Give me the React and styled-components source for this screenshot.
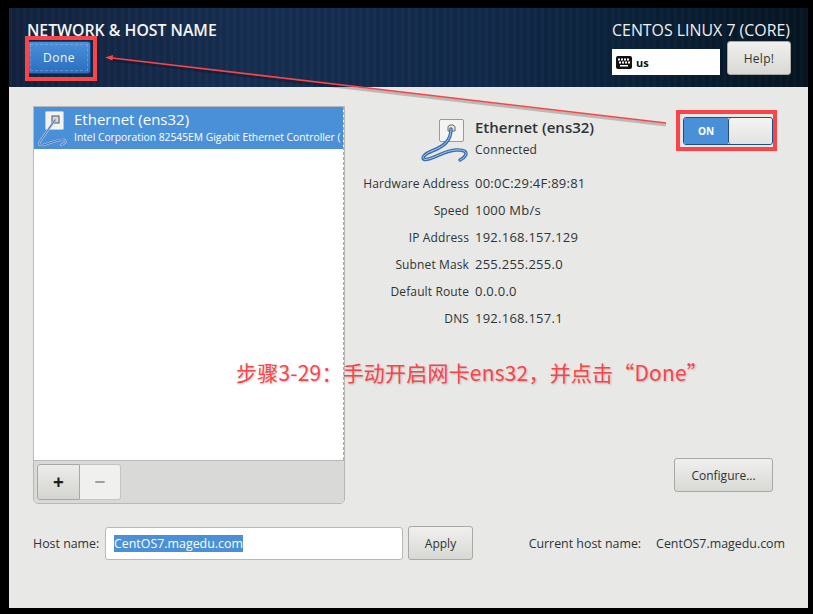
import React from 'react'
import styled, { createGlobalStyle } from 'styled-components'

const details = [
  ['Hardware Address', '00:0C:29:4F:89:81'],
  ['Speed', '1000 Mb/s'],
  ['IP Address', '192.168.157.129'],
  ['Subnet Mask', '255.255.255.0'],
  ['Default Route', '0.0.0.0'],
  ['DNS', '192.168.157.1'],
]

const largeCable = 'M32 11C32 22 26 28 13 33C4 36.500 2 41 6 41.500C15 41 25 32.500 37 32C45 31.500 49 34 46 38C45 40 43 41 41 42'
const smallCable = 'M19 13L5 33C2 37 3 38.500 7 38C15 36 23 32 28 33C31 34 30 36 25 38'

function CableIcon() {
  return (
    <svg width="54" height="50" viewBox="0 0 54 50">
      <rect x="20.500" y="1.500" width="24" height="22" rx="1.500" fill="#f4f4f2" stroke="#9a9a98" />
      <path d="M29 13V8.500L31 7H34L36 8.500V13z" fill="#e8e8e8" stroke="#666" />
      <path d={largeCable} fill="none" stroke="#3a6eb0" strokeWidth="3.500" strokeLinecap="round" />
      <path d={largeCable} fill="none" stroke="#a9c6e8" strokeWidth="1" strokeLinecap="round" />
    </svg>
  )
}

function RowCableIcon() {
  return (
    <svg width="36" height="42" viewBox="0 0 36 42">
      <rect x="9.500" y="4.500" width="18" height="18" rx="1" fill="#f2f2f0" stroke="#b9c6d6" />
      <rect x="16" y="9" width="7" height="7" fill="#d8d8d8" stroke="#555" />
      <path d={smallCable} fill="none" stroke="#a9c3e4" strokeWidth="2.400" strokeLinecap="round" />
      <path d={smallCable} fill="none" stroke="#3f6ea8" strokeWidth="1" strokeLinecap="round" />
    </svg>
  )
}

function KeyboardIcon() {
  return (
    <svg width="16" height="13" viewBox="0 0 16 13">
      <rect width="16" height="13" rx="2" fill="#111" />
      {[2, 5, 8, 11].map(x => <rect key={x} x={x} y="2.500" width="2" height="2" fill="#fff" />)}
      {[3, 6, 9, 12].map(x => <rect key={x} x={x} y="5.500" width="2" height="2" fill="#fff" />)}
      <rect x="4" y="9" width="8" height="1.500" fill="#fff" />
    </svg>
  )
}

export default function App() {
  return (
    <>
      <GlobalStyle />
      <Screen>
        <Header>
          <HeaderLeft>
            <Title>NETWORK &amp; HOST NAME</Title>
            <DoneButton>Done</DoneButton>
          </HeaderLeft>
          <HeaderRight>
            <Product>CENTOS LINUX 7 (CORE)</Product>
            <HeaderControls>
              <Layout>
                <KeyboardIcon />
                <span>us</span>
              </Layout>
              <HelpButton>Help!</HelpButton>
            </HeaderControls>
          </HeaderRight>
        </Header>

        <Main>
          <Columns>
            <DevicePanel>
              <DeviceList>
                <DeviceRow>
                  <RowCableIcon />
                  <DeviceText>
                    <DeviceName>Ethernet (ens32)</DeviceName>
                    <DeviceDesc>Intel Corporation 82545EM Gigabit Ethernet Controller (</DeviceDesc>
                  </DeviceText>
                </DeviceRow>
              </DeviceList>
              <ListToolbar>
                <AddButton>+</AddButton>
                <RemoveButton>−</RemoveButton>
              </ListToolbar>
            </DevicePanel>

            <DetailPane>
              <DetailTop>
                <DetailHead>
                  <CableIcon />
                  <div>
                    <DetailName>Ethernet (ens32)</DetailName>
                    <DetailStatus>Connected</DetailStatus>
                  </div>
                </DetailHead>
                <Toggle>
                  <ToggleOn>ON</ToggleOn>
                  <ToggleKnob />
                </Toggle>
              </DetailTop>
              <DetailGrid>
                {details.map(([label, value]) => (
                  <React.Fragment key={label}>
                    <DetailLabel>{label}</DetailLabel>
                    <DetailValue>{value}</DetailValue>
                  </React.Fragment>
                ))}
              </DetailGrid>
              <ConfigureButton>Configure...</ConfigureButton>
            </DetailPane>
          </Columns>

          <HostRow>
            <HostLabel>Host name:</HostLabel>
            <HostField><Selected>CentOS7.magedu.com</Selected></HostField>
            <ApplyButton>Apply</ApplyButton>
            <CurrentHost>
              <span>Current host name:</span>
              <span>CentOS7.magedu.com</span>
            </CurrentHost>
          </HostRow>
        </Main>

        <DoneMark />
        <ToggleMark />
        <Arrow width="813" height="614" viewBox="0 0 813 614">
          <line x1="666" y1="125" x2="112" y2="60" stroke="#000" strokeOpacity="0.2" strokeWidth="3" />
          <line x1="666" y1="123" x2="112" y2="58" stroke="#fb4348" strokeWidth="1.600" />
          <path d="M105 57.500L113 55L112.500 60.500z" fill="#fb4348" />
        </Arrow>
        <Note>步骤3-29：手动开启网卡ens32，并点击“Done”</Note>
      </Screen>
    </>
  )
}

const GlobalStyle = createGlobalStyle`
  html, body {
    margin: 0;
    background: #000;
  }
  body {
    font-family: "Open Sans", "Noto Sans", sans-serif;
  }
`

const Screen = styled.div`
  position: relative;
  width: 813px;
  height: 614px;
  padding: 8px 5px 6px 9px;
  box-sizing: border-box;
  background: #000;
  overflow: hidden;
  display: flex;
  flex-direction: column;
`

const Header = styled.header`
  height: 79px;
  flex: none;
  box-sizing: border-box;
  padding: 13px 17px 0 18px;
  display: flex;
  justify-content: space-between;
  color: #fff;
  background:
    repeating-linear-gradient(90deg, rgba(255, 255, 255, 0.015) 0 3px, rgba(0, 0, 0, 0.04) 3px 7px),
    linear-gradient(90deg, #13233f 0%, #162f52 30%, #122a4b 60%, #0a2138 80%, #061521 100%);
`

const HeaderLeft = styled.div`
  display: flex;
  flex-direction: column;
`

const Title = styled.h1`
  margin: 0;
  font-size: 15.800px;
  line-height: 18px;
  font-weight: 600;
  white-space: nowrap;
  color: #f4f5f7;
`

const DoneButton = styled.button`
  width: 64px;
  height: 33px;
  margin-top: 2px;
  padding: 0;
  border: 1px solid #16447f;
  border-radius: 3px;
  outline: 1px dashed rgba(170, 205, 245, 0.35);
  outline-offset: -4px;
  color: #f4f7fb;
  font: 12px "Open Sans", sans-serif;
  letter-spacing: 0.5px;
  background: linear-gradient(#4a90d9, #2a6fc0);
`

const HeaderRight = styled.div`
  display: flex;
  flex-direction: column;
  align-items: flex-end;
`

const Product = styled.div`
  font-size: 15.900px;
  line-height: 18px;
  margin-right: 1px;
  white-space: nowrap;
  color: #eef0f2;
`

const HeaderControls = styled.div`
  display: flex;
  align-items: flex-end;
  gap: 7px;
  margin-top: 2px;
`

const Layout = styled.div`
  width: 108px;
  height: 26px;
  box-sizing: border-box;
  padding-left: 4px;
  background: #fff;
  color: #111;
  display: flex;
  align-items: center;
  gap: 4px;
  font-size: 11px;
  font-weight: 700;
`

const GrayButton = styled.button`
  padding: 0;
  border: 1px solid #a8a8a4;
  border-radius: 3px;
  color: #2e3436;
  font: 12px "Open Sans", sans-serif;
  background: linear-gradient(#f0f0ee, #d8d8d5);
`

const HelpButton = styled(GrayButton)`
  width: 64px;
  height: 34px;
  letter-spacing: 0.3px;
`

const Main = styled.main`
  flex: 1;
  background: #e8e8e6;
  padding: 19px 23px 0 24px;
  display: flex;
  flex-direction: column;
`

const Columns = styled.div`
  display: flex;
  height: 398px;
`

const DevicePanel = styled.div`
  width: 312px;
  flex: none;
  box-sizing: border-box;
  border: 1px solid #b8b8b5;
  border-radius: 0 0 5px 5px;
  display: flex;
  flex-direction: column;
  overflow: hidden;
`

const DeviceList = styled.div`
  flex: 1;
  background: #fff;
  border-right: 1px dashed #aaa;
`

const DeviceRow = styled.div`
  height: 42px;
  box-sizing: border-box;
  padding-left: 2px;
  background: #4a90d9;
  color: #fff;
  display: flex;
  gap: 2px;
  overflow: hidden;
  white-space: nowrap;
`

const DeviceText = styled.div`
  min-width: 0;
  padding-top: 2px;
`

const DeviceName = styled.div`
  font-size: 15px;
  line-height: 21px;
`

const DeviceDesc = styled.div`
  font-size: 10.300px;
  line-height: 14px;
`

const ListToolbar = styled.div`
  height: 43px;
  flex: none;
  box-sizing: border-box;
  border-top: 1px solid #b8b8b5;
  background: #d9d9d7;
  padding: 3px;
  display: flex;
`

const AddButton = styled.button`
  width: 43px;
  height: 36px;
  padding: 0;
  border: 1px solid #a8a8a4;
  border-radius: 3px 0 0 3px;
  color: #1c1f20;
  font: 700 19px "Open Sans", sans-serif;
  background: linear-gradient(#ececea, #d4d4d1);
`

const RemoveButton = styled.button`
  width: 41px;
  height: 36px;
  padding: 0;
  border: 1px solid #c4c4c1;
  border-left: 0;
  border-radius: 0 3px 3px 0;
  color: #a0a09e;
  font: 700 19px "Open Sans", sans-serif;
  background: #f0f0ef;
`

const DetailPane = styled.div`
  flex: 1;
  display: flex;
  flex-direction: column;
  color: #2e3436;
`

const DetailTop = styled.div`
  display: flex;
  justify-content: space-between;
  height: 62px;
`

const DetailHead = styled.div`
  display: flex;
  gap: 2px;
  padding: 12px 0 0 74px;
`

const DetailName = styled.div`
  font-size: 15px;
  line-height: 19px;
  font-weight: 600;
`

const DetailStatus = styled.div`
  font-size: 12px;
  line-height: 17px;
  letter-spacing: 0.2px;
  margin-top: 4px;
`

const Toggle = styled.div`
  width: 90px;
  height: 28px;
  margin: 11px 12px 0 0;
  box-sizing: border-box;
  border: 1px solid #1d4f86;
  border-radius: 3px;
  display: flex;
  overflow: hidden;
`

const ToggleOn = styled.div`
  width: 44px;
  background: #4a90d9;
  color: #fff;
  font-size: 10px;
  font-weight: 700;
  line-height: 26px;
  text-align: center;
`

const ToggleKnob = styled.div`
  flex: 1;
  border-left: 1px solid #1d4f86;
  border-radius: 3px;
  background: linear-gradient(#f4f4f3, #e2e2e0);
`

const DetailGrid = styled.div`
  display: grid;
  grid-template-columns: 124px auto;
  grid-auto-rows: 27px;
  column-gap: 6px;
  align-content: start;
  margin-top: 2px;
  font-size: 12px;
  line-height: 27px;
`

const DetailLabel = styled.div`
  text-align: right;
  letter-spacing: 0.12px;
  white-space: nowrap;
`

const DetailValue = styled.div`
  font-size: 13px;
  letter-spacing: 0.25px;
  white-space: nowrap;
`

const ConfigureButton = styled(GrayButton)`
  width: 99px;
  height: 34px;
  margin: auto 12px 12px auto;
`

const HostRow = styled.div`
  display: flex;
  align-items: center;
  margin-top: 22px;
  height: 34px;
  font-size: 12.400px;
  color: #2e3436;
`

const HostLabel = styled.span`
  width: 72px;
  flex: none;
`

const HostField = styled.div`
  width: 298px;
  height: 33px;
  box-sizing: border-box;
  border: 1px solid #b8b8b5;
  border-radius: 3px;
  background: #fff;
  padding-left: 8px;
  display: flex;
  align-items: center;
`

const Selected = styled.span`
  background: #4a90d9;
  color: #fff;
  line-height: 17px;
`

const ApplyButton = styled(GrayButton)`
  width: 65px;
  height: 34px;
  margin-left: 5px;
`

const CurrentHost = styled.div`
  margin-left: auto;
  display: flex;
  gap: 15px;
`

const Mark = styled.div`
  position: absolute;
  box-sizing: border-box;
  border: 4px solid #fb4348;
`

const DoneMark = styled(Mark)`
  left: 25px;
  top: 36px;
  width: 72px;
  height: 45px;
`

const ToggleMark = styled(Mark)`
  left: 676px;
  top: 110px;
  width: 101px;
  height: 41px;
`

const Arrow = styled.svg`
  position: absolute;
  left: 0;
  top: 0;
  pointer-events: none;
`

const Note = styled.div`
  position: absolute;
  left: 236px;
  top: 358px;
  font: 400 21px/28px "Noto Sans CJK SC", "Noto Sans", sans-serif;
  letter-spacing: 0.2px;
  color: #fb4348;
  text-shadow: 1px 1px 2px rgba(0, 0, 0, 0.2);
  white-space: nowrap;
`
